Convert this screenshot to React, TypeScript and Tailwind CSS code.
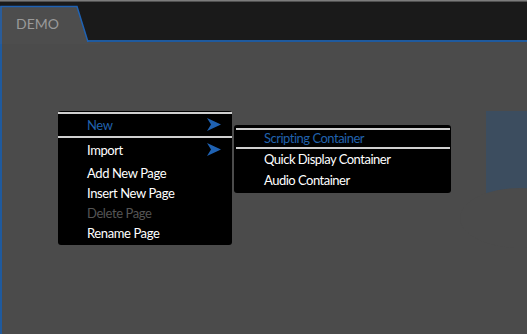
import React from "react";

const BLUE = "#1f62b3";
const TEXT_BLUE = "#2062ad";

function Arrow({ top }: { top: number }) {
  return (
    <svg
      className="absolute"
      style={{ left: 149, top }}
      width="14"
      height="13"
      viewBox="0 0 14 13"
    >
      <path d="M0 0 L14 6.5 L0 13 L4 6.5 Z" fill={BLUE} />
    </svg>
  );
}

function Sep({ inset = false }: { inset?: boolean }) {
  return <div className={inset ? "ml-[2px] mr-[1px] h-[2px] bg-[#cfcfcf]" : "h-[2px] bg-[#cfcfcf]"} />;
}

export default function App() {
  const font = { fontFamily: "Lato, 'Open Sans', sans-serif" };
  return (
    <div className="relative w-[527px] h-[334px] overflow-hidden bg-[#4b4b4b] flex flex-col" style={font}>
      <div className="h-[1px] bg-[#7c7c7c]" />
      <div className="h-[1px] bg-[#505050]" />
      <div className="relative h-[40px] bg-[#1a1a1a] border-b-2 border-[#1f5a9e]">
        <svg className="absolute left-0 top-0" width="100" height="42" viewBox="0 0 100 42">
          <path d="M0 42 L0 4 L77 4 L88 40 L100 40 L100 42 Z" fill="#4d4d4d" />
          <path d="M1 42 L1 4.5 L77 4.5 L88 40" fill="none" stroke={BLUE} strokeWidth="1.5" />
        </svg>
        <div className="absolute left-[16px] top-[15px] text-[14px] leading-none text-[#9a9a9a]">DEMO</div>
      </div>
      <div className="flex-1 border-l-2 border-[#1f5a9e]" />

      {/* blue canvas item at right */}
      <div className="absolute left-[486px] top-[111px] w-[60px] h-[90px] bg-[#3c4d5f]" />
      <div className="absolute left-[460px] top-[188px] w-[120px] h-[60px] rounded-[50%] bg-[#4b4b4b]" />

      {/* context menu */}
      <div className="absolute left-[58px] top-[111px] w-[174px] h-[134px] bg-black rounded-[3px] text-[13px] tracking-[-0.4px] text-white flex flex-col">
        <div className="mt-[1px]"><Sep /></div>
        <div className="h-[22px] flex items-center pl-[29px] leading-none" style={{ color: TEXT_BLUE }}>New</div>
        <Sep />
        <div className="h-[25px] flex items-center pl-[29px] leading-none">Import</div>
        <div className="h-[20px] flex items-center pl-[29px] leading-none">Add New Page</div>
        <div className="h-[20px] flex items-center pl-[29px] leading-none">Insert New Page</div>
        <div className="h-[20px] flex items-center pl-[29px] leading-none text-[#555555]">Delete Page</div>
        <div className="h-[20px] flex items-center pl-[29px] leading-none">Rename Page</div>
        <Arrow top={7} />
        <Arrow top={32} />
      </div>

      {/* submenu */}
      <div className="absolute left-[234px] top-[125px] w-[217px] h-[68px] bg-black rounded-[3px] text-[13px] tracking-[-0.5px] text-white flex flex-col">
        <div className="mt-[3px]"><Sep inset /></div>
        <div className="h-[17px] flex items-center pl-[30px] leading-none" style={{ color: TEXT_BLUE }}>Scripting Container</div>
        <Sep inset />
        <div className="h-[21px] flex items-center pl-[30px] leading-none">Quick Display Container</div>
        <div className="h-[20px] flex items-center pl-[30px] leading-none">Audio Container</div>
      </div>
    </div>
  );
}
